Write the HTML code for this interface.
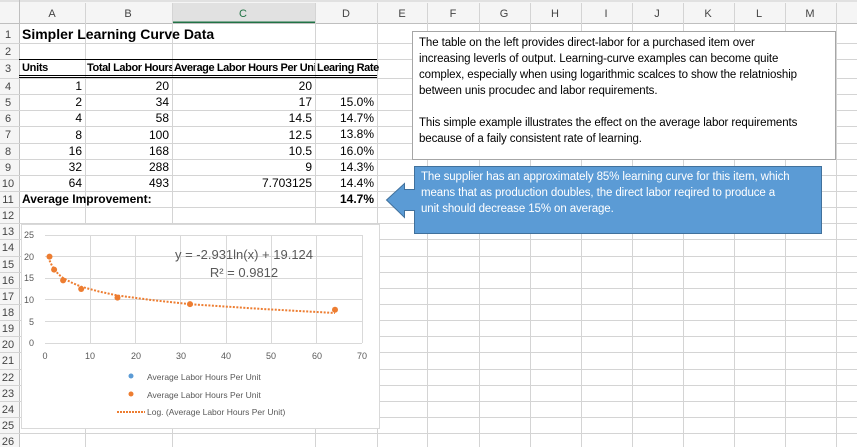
<!DOCTYPE html><html><head><style>
body{margin:0;width:857px;height:447px;overflow:hidden;background:#fff;font-family:"Liberation Sans",Arial,sans-serif;position:relative}
.a{position:absolute;white-space:nowrap;font-size:12px;color:#000;line-height:16px}
.r{text-align:right}
.b{font-weight:bold}
</style></head><body>
<svg width="857" height="447" style="position:absolute;left:0;top:0">
<rect x="0" y="0" width="857" height="23" fill="#f5f5f5"/>
<rect x="0" y="0" width="857" height="2" fill="#e1e1e1"/>
<rect x="0" y="23" width="19" height="424" fill="#f5f5f5"/>
<rect x="172" y="3" width="143" height="20" fill="#e1e1e1"/>
<line x1="172" y1="22.5" x2="315" y2="22.5" stroke="#217346" stroke-width="2"/>
<g stroke="#d4d4d4" stroke-width="1">
<line x1="0" y1="23.5" x2="857" y2="23.5" stroke="#bfbfbf"/>
<line x1="19.5" y1="0" x2="19.5" y2="447" stroke="#bfbfbf"/>
<path d="M85.5 3V447M172.5 3V447M315.5 3V447M377.5 3V447M427.5 3V447M479.5 3V447M530.5 3V447M581.5 3V447M632.5 3V447M683.5 3V447M734.5 3V447M785.5 3V447M836.5 3V447"/>
<path d="M0 43.5H857M0 59.5H857M0 78.5H857M0 94.5H857M0 110.5H857M0 126.5H857M0 143.5H857M0 159.5H857M0 175.5H857M0 191.5H857M0 207.5H857M0 223.5H857M0 239.5H857M0 256.5H857M0 272.5H857M0 288.5H857M0 304.5H857M0 320.5H857M0 336.5H857M0 352.5H857M0 369.5H857M0 385.5H857M0 401.5H857M0 417.5H857M0 433.5H857"/>
</g>
<line x1="19" y1="59.5" x2="377" y2="59.5" stroke="#000"/>
<line x1="19" y1="75.5" x2="377" y2="75.5" stroke="#000"/>
<line x1="19" y1="77.5" x2="377" y2="77.5" stroke="#000"/>
<rect x="412.5" y="31.5" width="423" height="128" fill="#fff" stroke="#a6a6a6"/>
<path d="M414.5 166.5H821.5V233.5H414.5V210.5H404.5V217.5L386.5 200L404.5 183.5V189.5H414.5Z" fill="#5b9bd5" stroke="#41719c"/>
<rect x="21.5" y="224.5" width="358" height="204" fill="#fff" stroke="#d9d9d9"/>
<g stroke="#d9d9d9"><path d="M45 235.5H362M45 256.5H362M45 278.5H362M45 299.5H362M45 321.5H362M45 343.5H362M90.5 235V343M135.5 235V343M180.5 235V343M226.5 235V343M271.5 235V343M316.5 235V343M362.5 235V343"/></g>
<g font-size="9" fill="#595959" font-family="Liberation Sans,sans-serif">
<text x="34" y="238" text-anchor="end">25</text><text x="34" y="260" text-anchor="end">20</text><text x="34" y="281" text-anchor="end">15</text><text x="34" y="303" text-anchor="end">10</text><text x="34" y="325" text-anchor="end">5</text><text x="34" y="346" text-anchor="end">0</text>
<text x="45" y="359" text-anchor="middle">0</text><text x="90" y="359" text-anchor="middle">10</text><text x="136" y="359" text-anchor="middle">20</text><text x="181" y="359" text-anchor="middle">30</text><text x="226" y="359" text-anchor="middle">40</text><text x="271" y="359" text-anchor="middle">50</text><text x="317" y="359" text-anchor="middle">60</text><text x="362" y="359" text-anchor="middle">70</text>
<text x="147" y="380" font-size="8.5">Average Labor Hours Per Unit</text>
<text x="147" y="398" font-size="8.5">Average Labor Hours Per Unit</text>
<text x="147" y="415" font-size="8.5">Log. (Average Labor Hours Per Unit)</text>
</g>
<g font-size="13" fill="#595959" text-anchor="middle"><text x="244" y="259">y = -2.931ln(x) + 19.124</text><text x="244" y="277">R² = 0.9812</text></g>
<polyline points="49.5,260.4 51.8,265.3 54.1,269.2 58.6,274.4 63.1,278 72.2,282.9 81.2,286.7 99.3,291.6 117.5,295.5 153.7,300.3 190,304.2 262.5,309 335,313" fill="none" stroke="#ed7d31" stroke-width="2" stroke-dasharray="2,1.5"/>
<g fill="#ed7d31"><circle cx="49.5" cy="256.6" r="3"/><circle cx="54.1" cy="269.6" r="3"/><circle cx="63.1" cy="280.4" r="3"/><circle cx="81.2" cy="289" r="3"/><circle cx="117.5" cy="297.6" r="3"/><circle cx="190" cy="304.1" r="3"/><circle cx="335" cy="309.7" r="3"/><circle cx="131" cy="394" r="2.5"/></g>
<circle cx="131" cy="376" r="2.5" fill="#5b9bd5"/>
<line x1="117" y1="412" x2="145" y2="412" stroke="#ed7d31" stroke-width="2" stroke-dasharray="2,1"/>
<g font-size="11" fill="#444" text-anchor="middle" font-family="Liberation Sans,sans-serif">
<text x="52" y="17">A</text><text x="128" y="17">B</text><text x="243" y="17" fill="#217346">C</text><text x="346" y="17">D</text><text x="402" y="17">E</text><text x="453" y="17">F</text><text x="504" y="17">G</text><text x="555" y="17">H</text><text x="606" y="17">I</text><text x="657" y="17">J</text><text x="708" y="17">K</text><text x="759" y="17">L</text><text x="810" y="17">M</text>
</g>
<g font-size="11" fill="#444" text-anchor="middle" font-family="Liberation Sans,sans-serif">
<text x="8" y="38">1</text><text x="8" y="55">2</text><text x="8" y="72">3</text><text x="8" y="90">4</text><text x="8" y="106">5</text><text x="8" y="122">6</text><text x="8" y="138">7</text><text x="8" y="155">8</text><text x="8" y="171">9</text><text x="8" y="187">10</text><text x="8" y="203">11</text><text x="8" y="219">12</text><text x="8" y="235">13</text><text x="8" y="251">14</text><text x="8" y="268">15</text><text x="8" y="284">16</text><text x="8" y="300">17</text><text x="8" y="316">18</text><text x="8" y="332">19</text><text x="8" y="348">20</text><text x="8" y="364">21</text><text x="8" y="381">22</text><text x="8" y="397">23</text><text x="8" y="413">24</text><text x="8" y="429">25</text><text x="8" y="445">26</text>
</g>
</svg>
<div class="a b" style="left:22px;top:25px;font-size:14px;line-height:18px">Simpler Learning Curve Data</div>
<div class="a b" style="left:22px;top:60px;font-size:11px;letter-spacing:-0.3px">Units</div>
<div class="a b" style="left:87px;top:60px;font-size:11px;letter-spacing:-0.4px;width:85px;overflow:hidden">Total Labor Hours</div>
<div class="a b" style="left:174px;top:60px;font-size:11px;letter-spacing:-0.4px;width:141px;overflow:hidden">Average Labor Hours Per Unit</div>
<div class="a b" style="left:317px;top:60px;font-size:11px;letter-spacing:-0.4px">Learing Rate</div>
<div class="a r" style="left:19px;width:63px;top:78px;line-height:16.2px">1<br>2<br>4<br>8<br>16<br>32<br>64</div>
<div class="a r" style="left:85px;width:84px;top:78px;line-height:16.2px">20<br>34<br>58<br>100<br>168<br>288<br>493</div>
<div class="a r" style="left:172px;width:140px;top:78px;line-height:16.2px">20<br>17<br>14.5<br>12.5<br>10.5<br>9<br>7.703125</div>
<div class="a r" style="left:315px;width:59px;top:94px;line-height:16.2px">15.0%<br>14.7%<br>13.8%<br>16.0%<br>14.3%<br>14.4%</div>
<div class="a b" style="left:22px;top:191px">Average Improvement:</div>
<div class="a b r" style="left:315px;width:59px;top:191px">14.7%</div>
<div class="a" style="left:419px;top:35px;font-size:11.5px;line-height:16px;letter-spacing:-0.1px">The table on the left provides direct-labor for a purchased item over<br>increasing leverls of output. Learning-curve examples can become quite<br>complex, especially when using logarithmic scalces to show the relatnioship<br>between unis procudec and labor requirements.<br><br>This simple example illustrates the effect on the average labor requirements<br>because of a faily consistent rate of learning.</div>
<div class="a" style="left:421px;top:169px;font-size:11.5px;line-height:16px;letter-spacing:-0.1px;color:#fff">The supplier has an approximately 85% learning curve for this item, which<br>means that as production doubles, the direct labor reqired to produce a<br>unit should decrease 15% on average.</div>
</body></html>
